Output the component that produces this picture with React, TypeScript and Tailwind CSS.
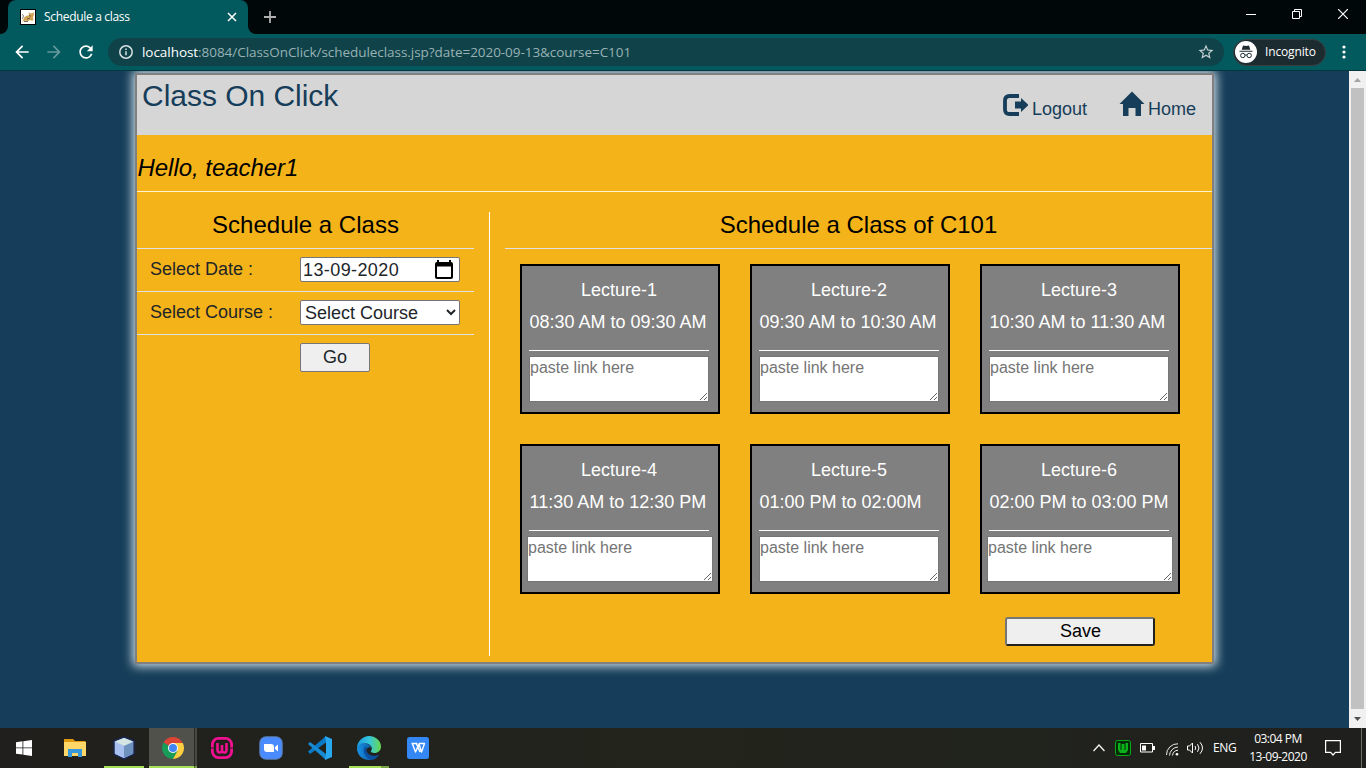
import React from "react";
import { MdArrowBack, MdArrowForward, MdRefresh, MdStarBorder } from "react-icons/md";

const lectures = [
  { name: "Lecture-1", time: "08:30 AM to 09:30 AM", wide: false },
  { name: "Lecture-2", time: "09:30 AM to 10:30 AM", wide: false },
  { name: "Lecture-3", time: "10:30 AM to 11:30 AM", wide: false },
  { name: "Lecture-4", time: "11:30 AM to 12:30 PM", wide: true },
  { name: "Lecture-5", time: "01:00 PM to 02:00M", wide: false },
  { name: "Lecture-6", time: "02:00 PM to 03:00 PM", wide: true },
];

function TabStrip() {
  return (
    <div className="flex h-[34px] bg-[#000708] text-white">
      <svg className="mt-[26px] h-2 w-2" viewBox="0 0 8 8"><path d="M8 0v8H0a8 8 0 0 0 8-8Z" fill="#035a5e" /></svg>
      <div className="flex h-[34px] w-[240px] items-center rounded-t-lg bg-[#035a5e] pl-3 pr-[11px]">
        <svg width="16" height="16" viewBox="0 0 16 16">
          <path fill="#000" d="M0 0h16v16H0z" />
          <path fill="#fff" d="M1 1h14v14H1z" />
          <path fill="#d2a455" d="M8.500 3l1.500 1.200h2L13.500 3l.5 3-1 2 .5 3-1.500 1-1.500-1-2.500 1-3-.3L2 12.500 3 11l1.500-3L7 6.500h2z" />
          <path d="M2 5.500c2 0 1.500 3 0 4.500M9 6l2 1.500M7 10l3-1M4 12.500h4" fill="none" stroke="#574b3c" strokeWidth=".8" />
        </svg>
        <span className="ml-2 flex-1 whitespace-nowrap text-[12px] tracking-[-0.32px]">Schedule a class</span>
        <svg width="10" height="10" viewBox="0 0 10 10" stroke="#fff" strokeWidth="1.5"><path d="m1 1 8 8M9 1 1 9" /></svg>
      </div>
      <svg className="mt-[26px] h-2 w-2" viewBox="0 0 8 8"><path d="M0 0v8h8a8 8 0 0 1-8-8Z" fill="#035a5e" /></svg>
      <svg className="ml-2 mt-[11px] h-3 w-3" viewBox="0 0 12 12" stroke="#b0b0b0" strokeWidth="1.8"><path d="M6 0v12M0 6h12" /></svg>
      <div className="ml-auto flex h-[28px] items-center">
        <svg width="10" height="10" viewBox="0 0 10 10" stroke="#fff"><path d="M0 5.500h10" /></svg>
        <svg className="ml-[36px]" width="10" height="10" viewBox="0 0 10 10" fill="none" stroke="#fff"><path d="M.5 2.500h7v7h-7zM2.500 2.500v-2h7v7h-2" /></svg>
        <svg className="ml-[36px] mr-[18px]" width="10" height="10" viewBox="0 0 10 10" stroke="#fff" strokeWidth="1.2"><path d="m0 0 10 10M10 0 0 10" /></svg>
      </div>
    </div>
  );
}

function Toolbar() {
  return (
    <div className="flex h-[37px] items-center border-b border-[#02383d] bg-[#035a5e] pl-3 text-white">
      <MdArrowBack size={20} />
      <MdArrowForward size={20} className="ml-3 text-[#65999c]" />
      <MdRefresh size={20} className="ml-3" />
      <div className="ml-3 flex h-7 w-[1116px] items-center rounded-full bg-[#0f4349] pl-[11px] pr-[9px]">
        <svg width="14" height="14" viewBox="0 0 14 14" fill="none" stroke="#d9e3e4" strokeWidth="1.5"><circle cx="7" cy="7" r="6.200" /><path d="M7 6.200v4M7 3.500V5" /></svg>
        <span className="ml-[9px] whitespace-nowrap text-[13.5px] tracking-[-0.05px] text-[#98b1b4]">
          <span className="text-white">localhost</span>:8084/ClassOnClick/scheduleclass.jsp?date=2020-09-13&amp;course=C101
        </span>
        <MdStarBorder size={18} className="ml-auto text-[#c3d0d1]" />
      </div>
      <div className="ml-[9px] flex h-[27px] w-[93px] items-center rounded-full border border-[#3b3f42] bg-[#1c2b30] pl-px">
        <svg width="22" height="22" viewBox="0 0 22 22">
          <circle cx="11" cy="11" r="11" fill="#fff" />
          <path d="m8 4.500 3 .6 3-.6 1.300 4.300H6.700zM4.500 9.800h13v1h-13z" fill="#202b30" />
          <path d="M10 14.200q1-.6 2 0" fill="none" stroke="#202b30" />
          <circle cx="7.800" cy="14.500" r="2.200" fill="none" stroke="#202b30" />
          <circle cx="14.200" cy="14.500" r="2.200" fill="none" stroke="#202b30" />
        </svg>
        <span className="ml-2 whitespace-nowrap text-[12px] tracking-[-0.15px]">Incognito</span>
      </div>
      <svg className="ml-[16px]" width="4" height="14" viewBox="0 0 4 14" fill="#fff"><circle cx="2" cy="2" r="1.600" /><circle cx="2" cy="7" r="1.600" /><circle cx="2" cy="12" r="1.600" /></svg>
    </div>
  );
}

function SiteHeader() {
  return (
    <header className="flex h-[60px] bg-[#d6d6d6] text-[#163d59]">
      <h1 className="ml-[5px] mt-px text-[30px] leading-10 tracking-[-0.03px]">Class On Click</h1>
      <nav className="ml-auto mr-[16px] flex text-[18px] leading-6">
        <a className="flex">
          <svg className="mr-1 mt-[19px]" width="25" height="22" viewBox="0 0 25 22">
            <path d="M16 2H6.500Q2 2 2 6.500v9Q2 20 6.500 20H16" fill="none" stroke="currentColor" strokeWidth="3.800" />
            <path d="M12 7.500h6V4l7.500 7-7.500 7v-3.500h-6z" fill="currentColor" />
          </svg>
          <span className="mt-[22px]">Logout</span>
        </a>
        <a className="ml-[32px] flex">
          <svg className="mr-[3px] mt-[16px]" width="26" height="25" viewBox="0 0 26 25" fill="currentColor"><path d="M13 .5 25.500 13H22v12h-5.500v-8h-7v8H4V13H.5z" /></svg>
          <span className="mt-[22px]">Home</span>
        </a>
      </nav>
    </header>
  );
}

function ScheduleForm() {
  return (
    <section className="w-[337px] text-[18px] leading-6 text-[#212529]">
      <h2 className="h-[37px] border-b border-[#dee2e6] pb-1 text-center text-[24px] leading-[26px] text-black">Schedule a Class</h2>
      <div className="flex h-[43px] items-start border-b border-[#dee2e6] pt-2 pl-[13px]">
        <label className="w-[150px]">Select Date :</label>
        <div className="flex h-[25px] w-[160px] items-center justify-between rounded-[2px] border border-[#767676] bg-white pl-[2px] pr-[6px]">
          <span className="tracking-[0.4px]">13-09-2020</span>
          <svg width="18" height="20" viewBox="0 0 18 20"><path d="M2 2V0h2v2h10V0h2v2q2 0 2 2v13q0 2-2 2H2q-2 0-2-2V4q0-2 2-2M2 6.500V17h14V6.500z" fillRule="evenodd" /></svg>
        </div>
      </div>
      <div className="flex h-[43px] items-start border-b border-[#dee2e6] pt-2 pl-[13px]">
        <label className="w-[150px]">Select Course :</label>
        <select className="h-[25px] w-[160px] rounded-[2px] border border-[#767676] bg-white text-[18px] text-[#212529]">
          <option>Select Course</option>
        </select>
      </div>
      <div className="pt-2 pl-[163px]">
        <button className="h-[29px] w-[70px] rounded-[2px] border border-[#767676] bg-[#efefef] pb-[2px]">Go</button>
      </div>
    </section>
  );
}

function LectureCard({ name, time, wide }: { name: string; time: string; wide: boolean }) {
  return (
    <article className="h-[150px] w-[200px] border-2 border-black bg-[#808080] pl-[7px] pt-3 text-[18px] leading-6 text-white">
      <div className="w-[180px] border-b border-white pb-4">
        <h3 className="text-center">{name}</h3>
        <p className="mt-2 whitespace-nowrap pl-[0.5px]">{time}</p>
      </div>
      <textarea
        placeholder="paste link here"
        className={
          wide
            ? "-ml-[2px] mt-[5px] block h-[46px] w-[186px] border border-[#767676] bg-white text-[16px] leading-[22px] placeholder:text-[#757575]"
            : "mt-[5px] block h-[46px] w-[180px] border border-[#767676] bg-white text-[16px] leading-[22px] placeholder:text-[#757575]"
        }
      />
    </article>
  );
}

function PageContent() {
  return (
    <main className="h-[591px] w-[1079px] border-2 border-[#808080] bg-[#f5b31a] font-['Liberation_Sans',Arial,sans-serif] shadow-[0_0_10px_2px_#d8e8f0]">
      <SiteHeader />
      <p className="h-[57px] border-b border-[#fff3d0] pl-[0.5px] pt-[17px] text-[24px] italic leading-8 tracking-[-0.04px] text-black">Hello, teacher1</p>
      <div className="mt-5 flex h-[444px]">
        <ScheduleForm />
        <div className="ml-[15px] w-px bg-white" />
        <section className="ml-[15px] flex-1">
          <h2 className="h-[37px] border-b border-[#dee2e6] text-center text-[24px] leading-[26px] text-black">Schedule a Class of C101</h2>
          <div className="ml-[15px] mt-[15px] grid w-[660px] grid-cols-3 gap-[30px]">
            {lectures.map((l) => <LectureCard key={l.name} {...l} />)}
          </div>
          <button className="ml-[500px] mt-[23px] block h-[29px] w-[150px] rounded-[3px] border-2 border-t-[#767676] border-l-[#767676] border-r-[#212121] border-b-[#212121] bg-[#efefef] pb-px pl-px text-[18px] leading-6 text-black">Save</button>
        </section>
      </div>
    </main>
  );
}

function Scrollbar() {
  return (
    <div className="flex w-[17px] flex-col items-center bg-[#f1f1f1]">
      <svg width="17" height="17" viewBox="0 0 17 17"><path d="m5 11 3.500-4L12 11z" fill="#a3a3a3" /></svg>
      <div className="h-[621px] w-[13px] bg-[#c1c1c1]" />
      <svg width="17" height="19" viewBox="0 0 17 19"><path d="m5 8 3.500 4L12 8z" fill="#505050" /></svg>
    </div>
  );
}

function Taskbar() {
  return (
    <footer className="flex h-10 bg-gradient-to-r from-[#201f1d] via-[#23251c] to-[#1f201e] text-white">
      <svg className="ml-4 mt-3" width="16" height="16" viewBox="0 0 16 16" fill="#fff"><path d="M0 2.200 6.500 1.300V7.500H0zM7.300 1.200 16 0v7.500H7.300zM0 8.300h6.500v6.200L0 13.700zM7.300 8.300H16V16l-8.700-1.300z" /></svg>
      <svg className="ml-[32px] mt-[10px]" width="22" height="20" viewBox="0 0 22 20">
        <path d="M0 1h9l2 2h10.500v15H0z" fill="#e09a10" /><path d="M0 4h22v14H0z" fill="#ffd668" />
        <path d="M4 19V11h14v8h-4v-4H8v4z" fill="#3898dc" />
      </svg>
      <div className="ml-[18px] flex w-10 justify-center border-b-2 border-[#a5e058] pt-2">
        <svg width="24" height="24" viewBox="0 0 24 24"><path d="m12 1 10 4v13l-10 5-10-5V5z" fill="#b8cde5" stroke="#182654" strokeWidth="1.500" /><path d="m3 6 9 4v12l-9-4z" fill="#a8c0ed" /><path d="m12 10 9-4v12l-9 4z" fill="#6e92be" /><path d="m3 5.500 9-3.500 9 3.500-9 4z" fill="#d5e6e2" /></svg>
      </div>
      <div className="ml-[5px] flex w-[45px] justify-center border-b-2 border-[#a5e058] bg-[#50514b] pl-[3px] pt-[9px]">
        <svg width="22" height="22" viewBox="0 0 22 22">
          <path d="M11 11 1.500 5.500A11 11 0 0 1 20.500 5.500z" fill="#dc4435" /><path d="M11 11h-1L1.500 5.500A11 11 0 0 0 11 22l5-8z" fill="#189d58" /><path d="M11 6h9.800A11 11 0 0 1 11 22l4.500-8z" fill="#ffcd40" />
          <circle cx="11" cy="11" r="5" fill="#fff" /><circle cx="11" cy="11" r="4" fill="#4285f4" />
        </svg>
      </div>
      <div className="w-[3px] border-b-2 border-l border-b-[#78a445] border-l-[#282a25] bg-[#454740]" />
      <svg className="ml-[14px] mt-[9px]" width="22" height="22" viewBox="0 0 22 22" fill="none" stroke="#f01090"><rect x="1.400" y="1.400" width="19.200" height="19.200" rx="6" strokeWidth="2.800" /><path d="M6.500 6v6.500q0 3 2.200 3T11 13V8v5q0 2.500 2.300 2.500t2.200-3V6" strokeWidth="2.600" /><path d="M0 11h3M19 11h3" stroke="#23231e" strokeWidth="1.200" /></svg>
      <svg className="ml-[26px] mt-[8px]" width="24" height="24" viewBox="0 0 24 24"><rect x=".8" y=".8" width="22.400" height="22.400" rx="6" fill="#4a8cff" stroke="#5a7fae" /><path d="M5 8h7q3 0 3 3v5H8q-3 0-3-3zM16 11l3-2.500v7L16 13z" fill="#fff" /></svg>
      <svg className="ml-[25px] mt-[8px]" width="24" height="24" viewBox="0 0 24 24"><path d="M18 0 0 15.500 2 18 18 6.500z" fill="#087ac6" /><path d="m0 8 2-2 16 12v6z" fill="#168bd4" /><path d="m17 0 7 3v18l-7 3 1-5V5z" fill="#27a8ef" /></svg>
      <div className="ml-[17px] flex w-8 justify-center border-b-2 border-[#a5e058] pl-2 pt-2">
        <svg width="24" height="24" viewBox="0 0 24 24">
          <defs>
            <linearGradient id="edge" x1="0" x2="1"><stop stopColor="#1d9ade" /><stop offset=".5" stopColor="#34c5df" /><stop offset="1" stopColor="#68d84d" /></linearGradient>
            <linearGradient id="edgeLow" x1="0" x2="1"><stop stopColor="#1793e6" /><stop offset="1" stopColor="#0b478f" /></linearGradient>
          </defs>
          <path d="M0 12C0 5 6 0 12 0s12 4.500 12 10.500c0 4-3 6.500-6.500 6.500-3 0-4.300-1.200-3.300-2.500 2-2.500-.5-6.500-5-7C5 7 1.500 9 0 12" fill="url(#edge)" />
          <path d="M0 12C1.500 8 5 6.500 9 7.500c3 .7 5.500 2.800 5.300 5-.7-1.500-3.600-1.800-4.800.5-2 4 2.500 10 10.500 8.500A12 12 0 0 1 12 24C5 24 0 18.500 0 12" fill="url(#edgeLow)" />
          <path d="M9.200 10C5 12 6 20 13.500 23.800q5.500-.3 9-5.400c-5.500 3-11.500.7-13-3.400-.5-1.800-.2-3.500-.3-5" fill="#0c4e9f" />
        </svg>
      </div>
      <div className="w-2 border-b-2 border-[#78a445]" />
      <svg className="ml-[18px] mt-[9px]" width="22" height="22" viewBox="0 0 22 22"><rect width="22" height="22" rx="2.500" fill="#3388f5" /><path d="M4.500 6.500h6M5.500 7l3 8L12 7l2.500 8 3-8.500H12M9.500 7l3.500 8" fill="none" stroke="#fff" strokeWidth="1.400" strokeLinejoin="round" /></svg>
      <div className="ml-auto flex h-10 items-center">
        <svg width="12" height="8" viewBox="0 0 12 8" fill="none" stroke="#eee" strokeWidth="1.400"><path d="m.5 7 5.500-6 5.500 6" /></svg>
        <svg className="ml-[10px]" width="16" height="16" viewBox="0 0 16 16"><rect x=".5" y=".5" width="15" height="15" rx="2" fill="#022b06" stroke="#08aa15" /><path d="M3 3v7l2 3h6l2-3V3h-2.500v7h-1V4h-3v6h-1V3z" fill="#08b218" /></svg>
        <svg className="ml-[9px]" width="15" height="10" viewBox="0 0 15 10"><path d="M.5.5h12v8.500H.5z" fill="none" stroke="#fff" /><path d="M2 2.500h4v5H2zM13 3h2v4h-2z" fill="#fff" /></svg>
        <svg className="ml-[11px] mt-[2px]" width="13" height="13" viewBox="0 0 13 13" fill="none" stroke="#eee"><path d="M.5 12A11 11 0 0 1 12 .8M3.500 12.500A9 9 0 0 1 12 4M6.500 12.500A6 6 0 0 1 12 7.200" /><circle cx="11" cy="11.300" r="1.300" fill="#fff" stroke="none" /></svg>
        <svg className="ml-[8px]" width="17" height="14" viewBox="0 0 17 14" fill="none" stroke="#fff"><path d="M.5 5v4h2l3 3V2l-3 3zM8 5q1.500 2 0 4M10.500 3.200q3 3.800 0 7.600M13 1.200q5 5.800 0 11.600" /></svg>
        <span className="ml-[9px] w-[24px] whitespace-nowrap text-[12px] tracking-[-0.4px]">ENG</span>
        <div className="ml-[9px] w-[64px] whitespace-nowrap text-center text-[12px] leading-[18px] tracking-[-0.5px]"><p>03:04 PM</p><p>13-09-2020</p></div>
        <svg className="ml-[15px]" width="16" height="16" viewBox="0 0 16 16" fill="none" stroke="#fff" strokeWidth="1.200"><path d="M.6.6h14.800v11.800h-5L8 15l-2.400-2.600h-5z" /></svg>
        <div className="ml-[20px] mr-1 h-10 w-px bg-[#6b6b68]" />
      </div>
    </footer>
  );
}

export default function App() {
  return (
    <div className="flex h-[768px] w-[1366px] flex-col overflow-hidden font-['Open_Sans',sans-serif]">
      <TabStrip />
      <Toolbar />
      <div className="flex h-[657px]">
        <div className="flex-1 overflow-hidden bg-[#163d59] pl-[135px] pt-[2px]"><PageContent /></div>
        <Scrollbar />
      </div>
      <Taskbar />
    </div>
  );
}
